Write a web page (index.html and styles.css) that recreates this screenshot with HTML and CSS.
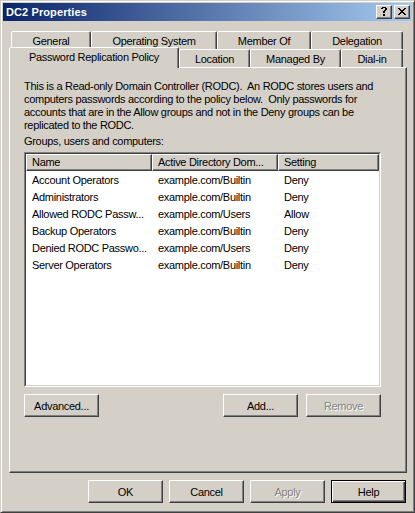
FILE: index.html
```html
<!DOCTYPE html>
<html>
<head>
<meta charset="utf-8">
<title>DC2 Properties</title>
<link rel="stylesheet" href="styles.css">
</head>
<body>
<div class="window">
  <div class="caption">
    <span class="caption-title">DC2 Properties</span>
    <div class="caption-buttons">
      <div class="cap-btn">
        <svg width="6" height="9" viewBox="0 0 6 9" shape-rendering="crispEdges"><path fill="#000" d="M1 0h4v1H1zM0 1h2v1H0zM4 1h2v2H4zM3 3h2v1H3zM2 4h2v2H2zM2 7h2v2H2z"/></svg>
      </div>
      <div class="cap-btn">
        <svg width="8" height="7" viewBox="0 0 8 7" shape-rendering="crispEdges"><path fill="#000" d="M0 0h2v1H0zM6 0h2v1H6zM1 1h2v1H1zM5 1h2v1H5zM2 2h4v1H2zM3 3h2v1H3zM2 4h4v1H2zM1 5h2v1H1zM5 5h2v1H5zM0 6h2v1H0zM6 6h2v1H6z"/></svg>
      </div>
    </div>
  </div>

  <div class="sheet">
    <div class="tab-row back">
      <div class="tab w-general">General</div>
      <div class="tab w-os">Operating System</div>
      <div class="tab w-member">Member Of</div>
      <div class="tab w-deleg">Delegation</div>
    </div>
    <div class="tab-row front">
      <div class="tab selected w-prp">Password Replication Policy</div>
      <div class="tab w-loc">Location</div>
      <div class="tab w-managed">Managed By</div>
      <div class="tab w-dial">Dial-in</div>
    </div>

    <div class="panel">
      <p class="intro">This is a Read-only Domain Controller (RODC).&nbsp; An RODC stores users and<br>computers passwords according to the policy below.&nbsp; Only passwords for<br>accounts that are in the Allow groups and not in the Deny groups can be<br>replicated to the RODC.</p>
      <div class="label">Groups, users and computers:</div>

      <div class="listbox">
        <div class="list-inner">
          <div class="list-header">
            <div class="hcell c-name">Name</div>
            <div class="hcell c-ad">Active Directory Dom...</div>
            <div class="hcell c-set">Setting</div>
          </div>
          <div class="list-row"><span class="cell c-name">Account Operators</span><span class="cell c-ad">example.com/Builtin</span><span class="cell c-set">Deny</span></div>
          <div class="list-row"><span class="cell c-name">Administrators</span><span class="cell c-ad">example.com/Builtin</span><span class="cell c-set">Deny</span></div>
          <div class="list-row"><span class="cell c-name">Allowed RODC Passw...</span><span class="cell c-ad">example.com/Users</span><span class="cell c-set">Allow</span></div>
          <div class="list-row"><span class="cell c-name">Backup Operators</span><span class="cell c-ad">example.com/Builtin</span><span class="cell c-set">Deny</span></div>
          <div class="list-row"><span class="cell c-name">Denied RODC Passwo...</span><span class="cell c-ad">example.com/Users</span><span class="cell c-set">Deny</span></div>
          <div class="list-row"><span class="cell c-name">Server Operators</span><span class="cell c-ad">example.com/Builtin</span><span class="cell c-set">Deny</span></div>
        </div>
      </div>

      <div class="list-actions">
        <div class="btn">Advanced...</div>
        <div class="btn-group">
          <div class="btn">Add...</div>
          <div class="btn disabled">Remove</div>
        </div>
      </div>
    </div>
  </div>

  <div class="footer">
    <div class="btn">OK</div>
    <div class="btn">Cancel</div>
    <div class="btn disabled">Apply</div>
    <div class="btn default">Help</div>
  </div>
</div>
</body>
</html>
```
FILE: styles.css
```css
* { box-sizing: border-box; }
html, body { margin: 0; padding: 0; }
body {
  background: #D4D0C8;
  font-family: "Liberation Sans", Arial, sans-serif;
  font-size: 11px;
  letter-spacing: -0.3px;
  color: #000;
}

.window {
  width: 415px;
  height: 513px;
  background: #D4D0C8;
  border: 1px solid;
  border-color: #D4D0C8 #404040 #404040 #D4D0C8;
  box-shadow: inset 1px 1px #fff, inset -1px -1px #808080;
  padding: 2px;
  display: flex;
  flex-direction: column;
}

.caption {
  height: 18px;
  display: flex;
  align-items: center;
  padding-left: 3px;
  background: linear-gradient(to right, #0A246A, #A6CAF0);
}
.caption-title {
  color: #fff;
  font-weight: bold;
  letter-spacing: 0.1px;
}
.caption-buttons {
  margin-left: auto;
  display: flex;
  gap: 2px;
  padding-right: 2px;
}
.cap-btn {
  width: 16px;
  height: 14px;
  background: #D4D0C8;
  border: 1px solid;
  border-color: #fff #404040 #404040 #fff;
  box-shadow: inset -1px -1px #808080;
  display: flex;
  align-items: center;
  justify-content: center;
  padding: 0 1px 1px 0;
}

.sheet {
  padding: 10px 0 0 6px;
}
.tab-row {
  display: flex;
  height: 18px;
  align-items: flex-start;
}
.tab-row.back { margin-left: 2px; }
.tab {
  height: 18px;
  border: 1px solid;
  border-bottom: none;
  border-color: #fff #404040 transparent #fff;
  box-shadow: inset -1px 0 #808080;
  border-radius: 2px 2px 0 0;
  display: flex;
  align-items: center;
  justify-content: center;
  background: #D4D0C8;
  white-space: nowrap;
}
.tab.selected {
  height: 21px;
  margin-top: -2px;
  position: relative;
  z-index: 1;
  padding-bottom: 3px;
}
.w-general { width: 80px; }
.w-os { width: 126px; }
.w-member { width: 94px; }
.w-deleg { width: 92px; }
.w-prp { width: 170px; }
.w-loc { width: 71px; }
.w-managed { width: 91px; }
.w-dial { width: 62px; }

.panel {
  width: 398px;
  height: 406px;
  border: 1px solid;
  border-color: #fff #404040 #404040 #fff;
  box-shadow: inset -1px -1px #808080;
  padding: 12px 0 0 14px;
}
.intro {
  margin: 0;
  line-height: 13px;
}
.label {
  margin-top: 3px;
  line-height: 13px;
}

.listbox {
  margin-top: 4px;
  width: 357px;
  height: 235px;
  border: 1px solid;
  border-color: #808080 #fff #fff #808080;
}
.list-inner {
  height: 100%;
  border: 1px solid;
  border-color: #404040 #D4D0C8 #D4D0C8 #404040;
  background: #fff;
}
.list-header {
  display: flex;
  height: 17px;
}
.hcell {
  background: #D4D0C8;
  border: 1px solid;
  border-color: #fff #404040 #404040 #fff;
  box-shadow: inset -1px -1px #808080;
  padding-left: 5px;
  line-height: 15px;
  white-space: nowrap;
}
.c-name { width: 126px; }
.c-ad { width: 126px; }
.c-set { width: 101px; }
.list-row {
  display: flex;
  height: 17px;
  align-items: center;
}
.cell {
  padding-left: 6px;
  white-space: nowrap;
}

.list-actions {
  width: 357px;
  margin-top: 7px;
  display: flex;
  justify-content: space-between;
}
.btn-group {
  display: flex;
  gap: 8px;
}
.btn {
  width: 75px;
  height: 23px;
  border: 1px solid;
  border-color: #fff #404040 #404040 #fff;
  box-shadow: inset -1px -1px #808080;
  display: flex;
  align-items: center;
  justify-content: center;
  background: #D4D0C8;
}
.btn.disabled {
  color: #808080;
  text-shadow: 1px 1px #fff;
}
.btn.default {
  border-color: #000;
  box-shadow: inset 1px 1px #fff, inset -1px -1px #404040, inset -2px -2px #808080;
}

.footer {
  display: flex;
  justify-content: flex-end;
  gap: 6px;
  margin-top: 7px;
  padding-right: 6px;
}
```
